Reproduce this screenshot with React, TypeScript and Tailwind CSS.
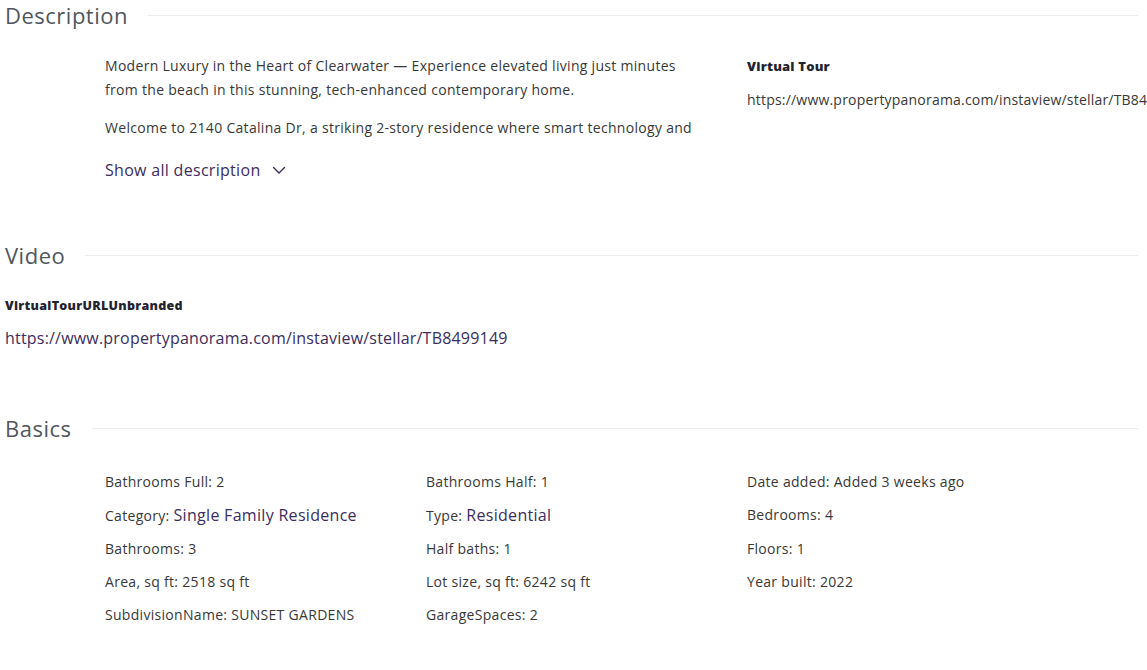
import React from "react";

const font = { fontFamily: "'Open Sans', 'Noto Sans', sans-serif" };

function SectionTitle({ title }: { title: string }) {
  return (
    <div className="flex items-center">
      <h2 className="text-[22px] leading-[30px] tracking-[0.5px] text-[#50565e] font-normal">{title}</h2>
      <div className="ml-[20px] mr-[9px] h-px flex-1 bg-[#ececec]" />
    </div>
  );
}

function Chevron() {
  return (
    <svg width="16" height="16" viewBox="0 0 16 16" fill="none" stroke="#3b2d5e" strokeWidth="1.4" strokeLinecap="round" strokeLinejoin="round">
      <path d="M2.5 5.5L8 11l5.5-5.5" />
    </svg>
  );
}

type Item = { label: string; value: string; link?: boolean };

const basics: Item[] = [
  { label: "Bathrooms Full", value: "2" },
  { label: "Bathrooms Half", value: "1" },
  { label: "Date added", value: "Added 3 weeks ago" },
  { label: "Category", value: "Single Family Residence", link: true },
  { label: "Type", value: "Residential", link: true },
  { label: "Bedrooms", value: "4" },
  { label: "Bathrooms", value: "3" },
  { label: "Half baths", value: "1" },
  { label: "Floors", value: "1" },
  { label: "Area, sq ft", value: "2518 sq ft" },
  { label: "Lot size, sq ft", value: "6242 sq ft" },
  { label: "Year built", value: "2022" },
  { label: "SubdivisionName", value: "SUNSET GARDENS" },
  { label: "GarageSpaces", value: "2" },
];

export default function App() {
  return (
    <div className="w-[1147px] h-[670px] overflow-hidden bg-white pl-[5px] text-[#383838]" style={font}>
      <SectionTitle title="Description" />
      <div className="mt-[24px] ml-[100px] grid grid-cols-[642px_400px]">
        <div>
          <p className="text-[14px] leading-[24px] tracking-[0.3px] w-[600px]">
            Modern Luxury in the Heart of Clearwater — Experience elevated living just minutes from the beach in this stunning, tech-enhanced contemporary home.
          </p>
          <p className="mt-[14px] text-[14px] leading-[24px] tracking-[0.3px] whitespace-nowrap">
            Welcome to 2140 Catalina Dr, a striking 2-story residence where smart technology and
          </p>
          <button className="mt-[18px] flex items-center gap-[10px] text-[16px] leading-[24px] tracking-[0.3px] text-[#3b2d5e]">
            Show all description
            <Chevron />
          </button>
        </div>
        <div>
          <div className="text-[13px] leading-[24px] font-extrabold tracking-[0.2px] text-[#1f2430]">Virtual Tour</div>
          <div className="mt-[10px] text-[14px] leading-[24px] tracking-[0.2px] whitespace-nowrap text-[#383838]">
            https://www.propertypanorama.com/instaview/stellar/TB8499149
          </div>
        </div>
      </div>

      <div className="mt-[58px]">
        <SectionTitle title="Video" />
      </div>
      <div className="mt-[27px] text-[12.5px] leading-[18px] font-extrabold tracking-[0.3px] text-[#1f2430]">VirtualTourURLUnbranded</div>
      <div className="mt-[11px] text-[16px] leading-[24px] tracking-[0.2px] text-[#3b2d5e]">
        https://www.propertypanorama.com/instaview/stellar/TB8499149
      </div>

      <div className="mt-[63px]">
        <SectionTitle title="Basics" />
      </div>
      <div className="mt-[27px] ml-[100px] grid grid-cols-[321px_321px_321px] gap-y-[9px]">
        {basics.map((it) => (
          <div key={it.label} className="text-[14px] leading-[24px] tracking-[0.3px] whitespace-nowrap">
            {it.label}:{" "}
            {it.link ? (
              <span className="text-[16px] text-[#3b2d5e]">{it.value}</span>
            ) : (
              it.value
            )}
          </div>
        ))}
      </div>
    </div>
  );
}
